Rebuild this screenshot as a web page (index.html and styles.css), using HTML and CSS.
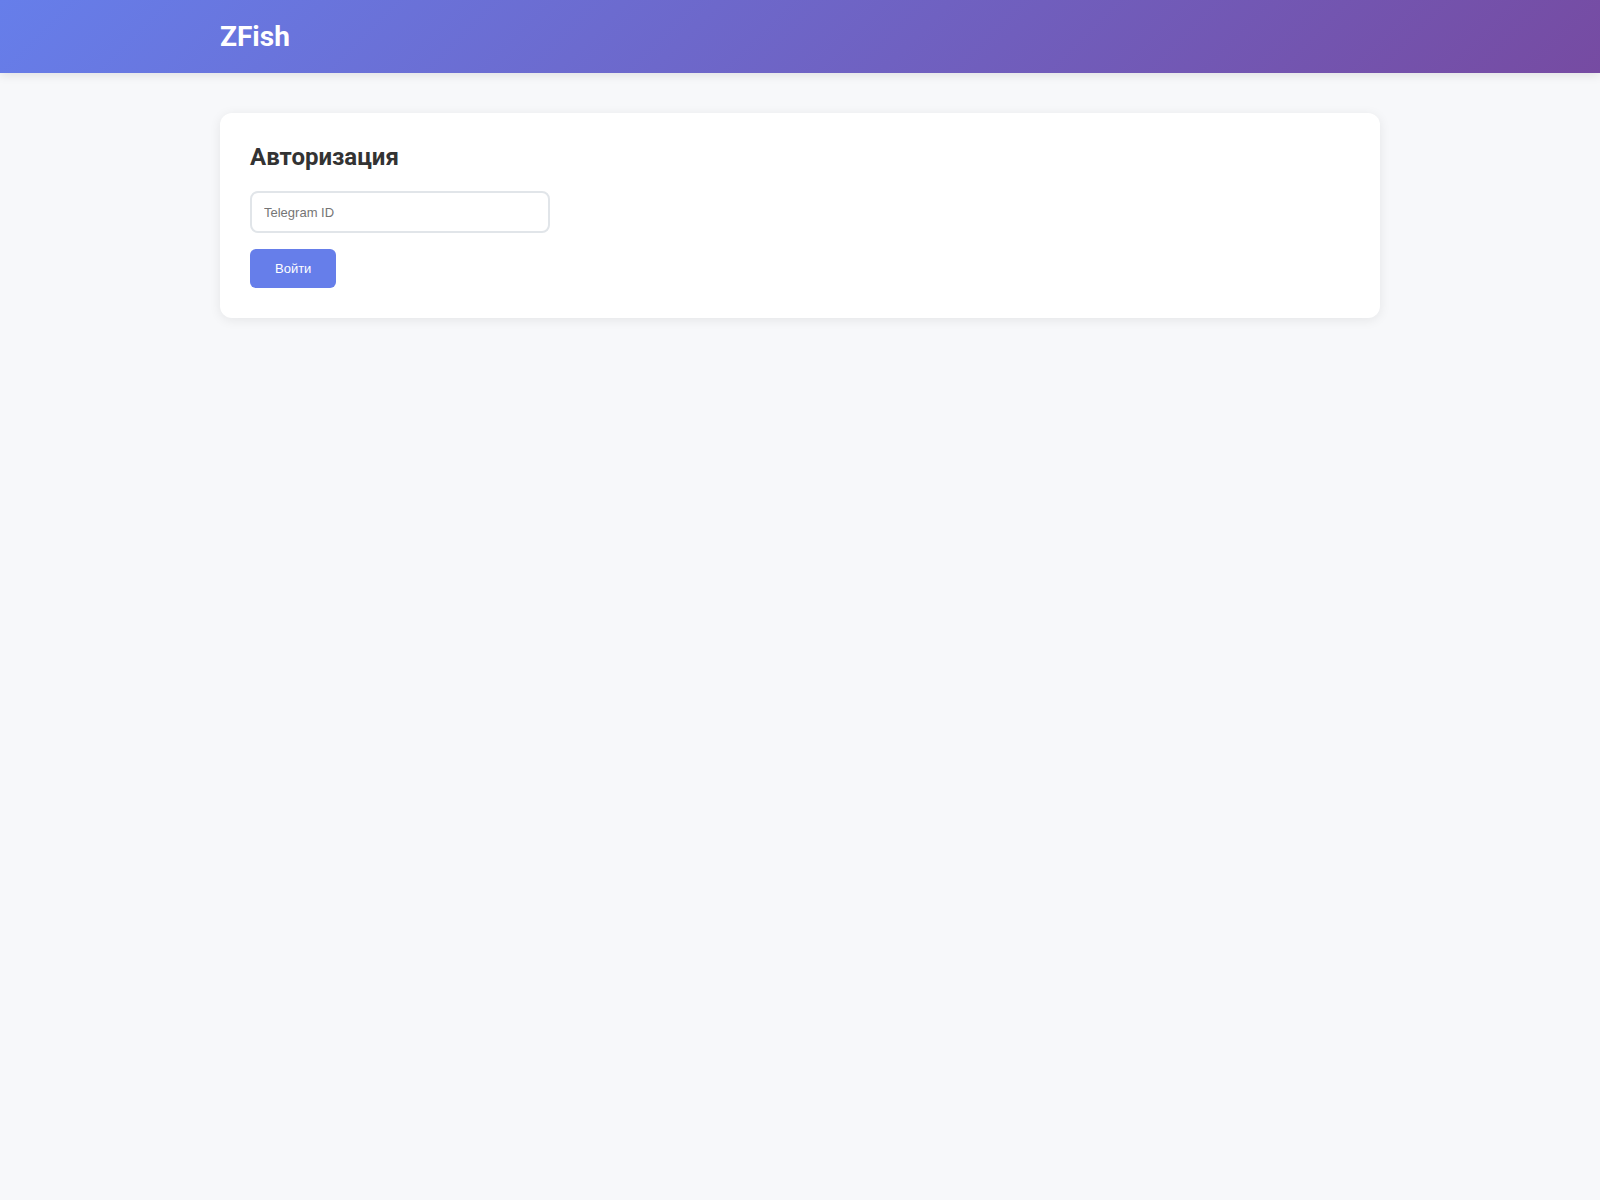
FILE: index.html
```html
<!DOCTYPE html>
<html lang="ru">
<head>
<meta charset="utf-8">
<title>ZFish</title>
<link rel="stylesheet" href="styles.css">
</head>
<body>
<header class="header">
  <div class="container">
    <h1 class="logo">ZFish</h1>
  </div>
</header>
<main class="container main">
  <section class="card">
    <h2 class="card-title">Авторизация</h2>
    <form class="form">
      <input class="input" type="text" placeholder="Telegram ID">
      <button class="btn" type="button">Войти</button>
    </form>
  </section>
</main>
</body>
</html>
```
FILE: styles.css
```css
* { box-sizing: border-box; }
html, body { margin: 0; padding: 0; }
body {
  background: #f7f8fa;
  font-family: Roboto, "Liberation Sans", Arial, sans-serif;
  color: #333;
  min-height: 1200px;
}
.container {
  max-width: 1200px;
  margin: 0 auto;
  padding: 0 20px;
}
.header {
  background: linear-gradient(135deg, #667eea 0%, #764ba2 100%);
  padding: 20px 0;
  box-shadow: 0 2px 10px rgba(0,0,0,0.1);
}
.logo {
  margin: 0;
  color: #fff;
  font-size: 28px;
  font-weight: 700;
  line-height: 33px;
}
.main { padding-top: 40px; }
.card {
  background: #fff;
  border-radius: 12px;
  padding: 30px;
  box-shadow: 0 2px 12px rgba(0,0,0,0.08);
}
.card-title {
  margin: 0 0 20px;
  font-size: 24px;
  font-weight: 700;
  line-height: 28px;
  color: #333;
}
.form {
  display: flex;
  flex-direction: column;
  align-items: flex-start;
  gap: 16px;
}
.input {
  width: 300px;
  height: 42px;
  padding: 0 12px;
  border: 2px solid #e1e5e9;
  border-radius: 8px;
  font-family: "Liberation Sans", Arial, sans-serif;
  font-size: 13px;
  color: #333;
  background: #fff;
  outline: none;
}
.input::placeholder { color: #757575; }
.btn {
  height: 39px;
  padding: 0 25px;
  border: none;
  border-radius: 6px;
  background: #667eea;
  color: #fff;
  font-family: "Liberation Sans", Arial, sans-serif;
  font-size: 13px;
  cursor: pointer;
}
```
